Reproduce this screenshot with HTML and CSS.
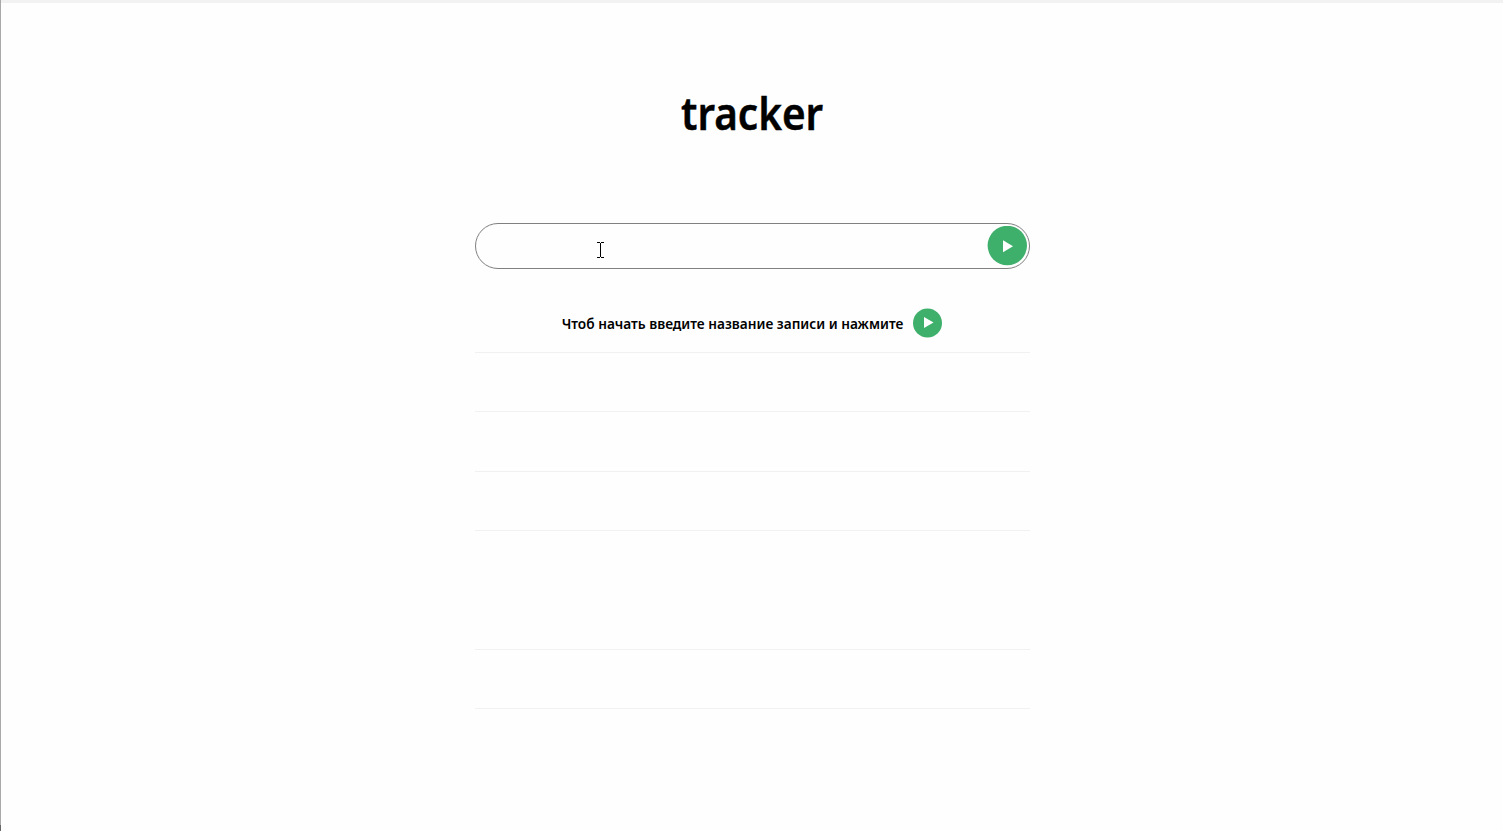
FILE: index.html
```html
<!DOCTYPE html>
<html lang="ru">
<head>
<meta charset="utf-8">
<title>tracker</title>
<link rel="stylesheet" href="styles.css">
</head>
<body>
<main class="page">
  <h1 class="title"><span class="title-text">tracker</span></h1>
  <form class="entry">
    <input class="entry-input" type="text" aria-label="Название записи">
    <button class="play" type="button" aria-label="Начать">
      <svg viewBox="0 0 40 40"><circle cx="20.3" cy="19.5" r="19.7"/><path d="M16 14.3v12l10-6z"/></svg>
    </button>
    <svg class="caret" viewBox="0 0 7 16" shape-rendering="crispEdges"><path d="M0 0h3v1H0zM4 0h3v1H4zM3 1h1v14H3zM0 15h3v1H0zM4 15h3v1H4z"/></svg>
  </form>
  <section class="records">
    <div class="row hint">
      <p class="hint-box"><span class="hint-text">Чтоб начать введите название записи и нажмите</span></p>
      <svg class="hint-icon" viewBox="0 0 29 30"><circle cx="14.5" cy="15" r="14.5"/><path d="M11 9v11l9.5-5.5z"/></svg>
    </div>
    <div class="row"></div>
    <div class="row row-tall"></div>
    <div class="row"></div>
    <div class="row row-double"></div>
    <div class="row"></div>
  </section>
</main>
</body>
</html>
```
FILE: styles.css
```css
* { box-sizing: border-box; }
body {
  margin: 0;
  background: #fefefe;
  color: #000;
  font-family: "Noto Sans", "Open Sans", sans-serif;
}
.page {
  display: flex;
  flex-direction: column;
  align-items: center;
  height: 831px;
  padding: 3px 0 0 2px;
  background:
    linear-gradient(#a9a9a9 825px, #666 825px) left top / 1px 100% no-repeat,
    linear-gradient(#f2f2f2, #f2f2f2) left top / 100% 3px no-repeat;
  overflow: hidden;
}
.title {
  display: flex;
  justify-content: center;
  width: 141px;
  height: 64px;
  margin: 78px 0 78px;
  font-size: 45px;
  line-height: 64px;
  font-weight: 600;
}
.title-text { transform: scaleX(.898); -webkit-text-stroke: .5px #000; }
.entry {
  position: relative;
  display: flex;
  align-items: center;
  width: 555px;
  height: 46px;
  padding: 0 2px 1px 20px;
  border: 1px solid #808080;
  border-radius: 23px;
}
.entry-input {
  flex: 1;
  min-width: 0;
  border: 0;
  outline: 0;
  background: transparent;
  font: inherit;
}
.play {
  width: 40px;
  height: 40px;
  padding: 0;
  border: 0;
  background: none;
}
.play svg { display: block; }
circle { fill: #3fb06c; }
circle + path { fill: #fff; }
.caret {
  position: absolute;
  left: 121px;
  top: 18px;
  width: 7px;
  height: 16px;
}
.records { width: 555px; margin-top: 24px; }
.row { height: 59px; border-bottom: 1px solid #f1f1f1; }
.row-tall { height: 60px; }
.row-double { height: 119px; }
.hint {
  display: flex;
  align-items: center;
  justify-content: center;
  gap: 10px;
  height: 60px;
  padding-right: 1px;
}
.hint-box {
  display: flex;
  justify-content: center;
  width: 341px;
  margin: 0;
  font-size: 15px;
  font-weight: 600;
  white-space: nowrap;
}
.hint-text { transform: scaleX(.911); }
.hint-icon { width: 29px; height: 30px; }
```
